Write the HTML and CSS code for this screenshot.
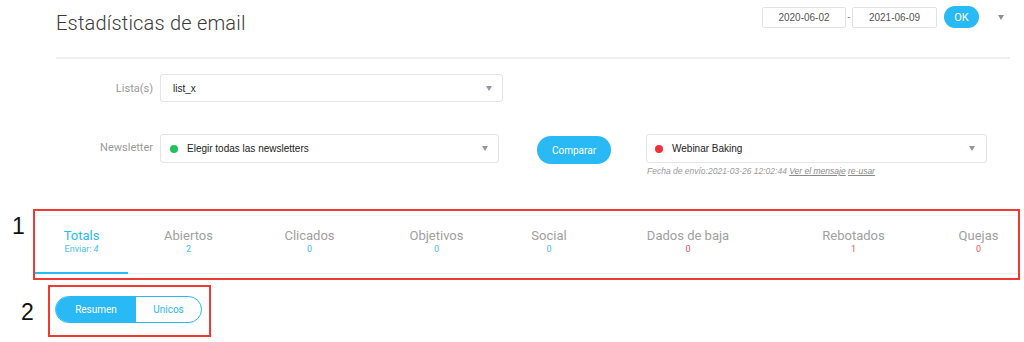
FILE: index.html
```html
<!DOCTYPE html>
<html lang="es">
<head>
    <meta charset="UTF-8">
    <meta name="viewport" content="width=device-width, initial-scale=1.0">
    <title>Estadísticas de email</title>
    <link rel="stylesheet" href="styles.css">
</head>
<body>
    <div class="header">
        <h1 class="title">Estadísticas de email</h1>
        <div class="dates">
            <div class="date-box">2020-06-02</div>
            <span class="dash">-</span>
            <div class="date-box">2021-06-09</div>
            <button class="ok-button">OK</button>
            <span class="caret small"></span>
        </div>
    </div>

    <div class="field first">
        <label class="field-label">Lista(s)</label>
        <div class="select list-select">
            <span>list_x</span>
            <span class="caret"></span>
        </div>
    </div>

    <div class="field second">
        <label class="field-label">Newsletter</label>
        <div class="select news-select">
            <span class="dot green"></span>
            <span>Elegir todas las newsletters</span>
            <span class="caret"></span>
        </div>
        <button class="compare-button">Comparar</button>
        <div class="compare-group">
            <div class="select compare-select">
                <span class="dot red"></span>
                <span>Webinar Baking</span>
                <span class="caret"></span>
            </div>
            <div class="sent-info">Fecha de envío:2021-03-26 12:02:44 <a href="#">Ver el mensaje</a> <a href="#">re-usar</a></div>
        </div>
    </div>

    <!-- annotated block 1: stats tabs -->
    <div class="note-row one">
        <span class="note-num">1</span>
        <div class="note-box tabs-box">
            <div class="tabs">
                <div class="tab active"><div class="tab-name">Totals</div><div class="tab-count">Enviar: <i>4</i></div></div>
                <div class="tab"><div class="tab-name">Abiertos</div><div class="tab-count">2</div></div>
                <div class="tab"><div class="tab-name">Clicados</div><div class="tab-count">0</div></div>
                <div class="tab"><div class="tab-name">Objetivos</div><div class="tab-count">0</div></div>
                <div class="tab"><div class="tab-name">Social</div><div class="tab-count">0</div></div>
                <div class="tab"><div class="tab-name">Dados de baja</div><div class="tab-count bad">0</div></div>
                <div class="tab"><div class="tab-name">Rebotados</div><div class="tab-count bad">1</div></div>
                <div class="tab last"><div class="tab-name">Quejas</div><div class="tab-count bad">0</div></div>
            </div>
        </div>
    </div>

    <!-- annotated block 2: summary / unique switch -->
    <div class="note-row two">
        <span class="note-num">2</span>
        <div class="note-box toggle-box">
            <div class="toggle">
                <span class="toggle-item on">Resumen</span>
                <span class="toggle-item">Unicos</span>
            </div>
        </div>
    </div>
</body>
</html>
```

FILE: styles.css
```css
body {
    margin: 0;
    font-family: Roboto, "Liberation Sans", Arial, sans-serif;
    color: #333;
    background: #fff;
}
.header {
    display: flex;
    justify-content: space-between;
    align-items: flex-start;
    height: 57px;
    margin: 0 14px 0 56px;
    border-bottom: 2px solid #efefef;
}
.title {
    margin: 0;
    padding-top: 11px;
    font-size: 20px;
    line-height: 24px;
    font-weight: 300;
    letter-spacing: 0.2px;
    color: #3a3a3a;
}
.dates {
    display: flex;
    align-items: center;
    margin-top: 6px;
    padding-right: 6px;
}
.date-box {
    width: 82px;
    height: 19px;
    line-height: 19px;
    border: 1px solid #e3e3e3;
    border-radius: 2px;
    text-align: center;
    font-family: "Liberation Sans", Arial, sans-serif;
    font-size: 10px;
    color: #555;
}
.dash {
    width: 6px;
    text-align: center;
    font-size: 10px;
    color: #777;
}
.date-box + .dash + .date-box {
    width: 83px;
}
.ok-button {
    width: 35px;
    height: 22px;
    margin-left: 7px;
    padding: 0;
    border: none;
    border-radius: 11px;
    background: #29b9f5;
    color: #fff;
    font-family: Roboto, sans-serif;
    font-size: 11px;
}
.caret {
    display: inline-block;
    width: 0;
    height: 0;
    border-left: 3px solid transparent;
    border-right: 3px solid transparent;
    border-top: 5px solid #8d99a6;
}
.caret.small {
    margin-left: 19px;
    border-top-color: #8a8f96;
}
.field {
    display: flex;
    align-items: center;
}
.field.first {
    margin-top: 15px;
}
.field.second {
    margin-top: 32px;
    align-items: flex-start;
}
.field-label {
    width: 160px;
    padding-right: 7px;
    box-sizing: border-box;
    text-align: right;
    font-size: 11px;
    color: #9a9a9a;
}
.field.second .field-label {
    line-height: 28px;
}
.select {
    display: flex;
    align-items: center;
    height: 26px;
    padding: 0 10px 0 12px;
    border: 1px solid #e4e4e4;
    border-radius: 3px;
    box-sizing: content-box;
    font-family: "Liberation Sans", Arial, sans-serif;
    font-size: 10px;
    color: #222;
}
.select .caret {
    margin-left: auto;
}
.list-select {
    width: 319px;
}
.news-select {
    width: 318px;
    height: 27px;
    padding-left: 9px;
}
.dot {
    width: 8px;
    height: 8px;
    border-radius: 50%;
    margin-right: 9px;
}
.dot.green {
    background: #1fc35c;
}
.dot.red {
    background: #f2303a;
}
.compare-button {
    width: 74px;
    height: 28px;
    margin: 2px 0 0 38px;
    padding: 0;
    border: none;
    border-radius: 14px;
    background: #29b9f5;
    color: #fff;
    font-family: Roboto, sans-serif;
    font-size: 10px;
}
.compare-group {
    margin-left: 35px;
}
.compare-select {
    width: 321px;
    height: 27px;
    padding-left: 8px;
}
.compare-select .caret {
    margin-right: 1px;
}
.sent-info {
    margin-top: 3px;
    padding-left: 1px;
    font-family: "Liberation Sans", Arial, sans-serif;
    font-size: 8.5px;
    font-style: italic;
    color: #9a9a9a;
}
.sent-info a {
    color: #8a8a8a;
}
.note-row {
    display: flex;
}
.note-num {
    font-family: "Liberation Sans", Arial, sans-serif;
    font-size: 23px;
    line-height: 24px;
    color: #111;
}
.note-box {
    border: 2px solid #ee3a32;
}
.note-row.one {
    margin-top: 33px;
    align-items: flex-start;
}
.note-row.one .note-num {
    width: 33px;
    padding: 5px 0 0 12px;
    box-sizing: border-box;
}
.tabs-box {
    width: 983px;
    padding: 4px 0 4px 0;
}
.tabs {
    display: grid;
    grid-template-columns: 93px 121px 121px 133px 92px 186px 145px 1fr;
    border-top: 1px solid #f3f3f3;
    border-bottom: 1px solid #eeeeee;
    height: 57px;
}
.tab {
    padding-top: 12px;
    text-align: center;
}
.tab.active {
    border-bottom: 2px solid #29b9f5;
    margin-bottom: -1px;
}
.tab.last {
    padding-left: 13px;
}
.tab-name {
    font-size: 13px;
    line-height: 15px;
    color: #a0a0a0;
}
.tab.active .tab-name {
    color: #29b9f5;
}
.tab-count {
    margin-top: 1px;
    font-size: 9px;
    line-height: 11px;
    color: #45c0f5;
}
.tab-count.bad {
    color: #f4505a;
}
.note-row.two {
    margin-top: 5px;
    align-items: center;
}
.note-row.two .note-num {
    width: 48px;
    padding: 2px 0 0 21px;
    box-sizing: border-box;
}
.toggle-box {
    width: 163px;
    height: 52px;
    padding: 9px 0 0 5px;
    box-sizing: border-box;
}
.toggle {
    display: flex;
    width: 147px;
    height: 27px;
    border: 1px solid #29b9f5;
    border-radius: 14px;
    box-sizing: border-box;
    overflow: hidden;
}
.toggle-item {
    flex: 1;
    display: flex;
    align-items: center;
    justify-content: center;
    font-size: 10px;
    color: #29b9f5;
}
.toggle-item.on {
    flex: 0 0 80px;
    background: #29b9f5;
    color: #fff;
}
```
